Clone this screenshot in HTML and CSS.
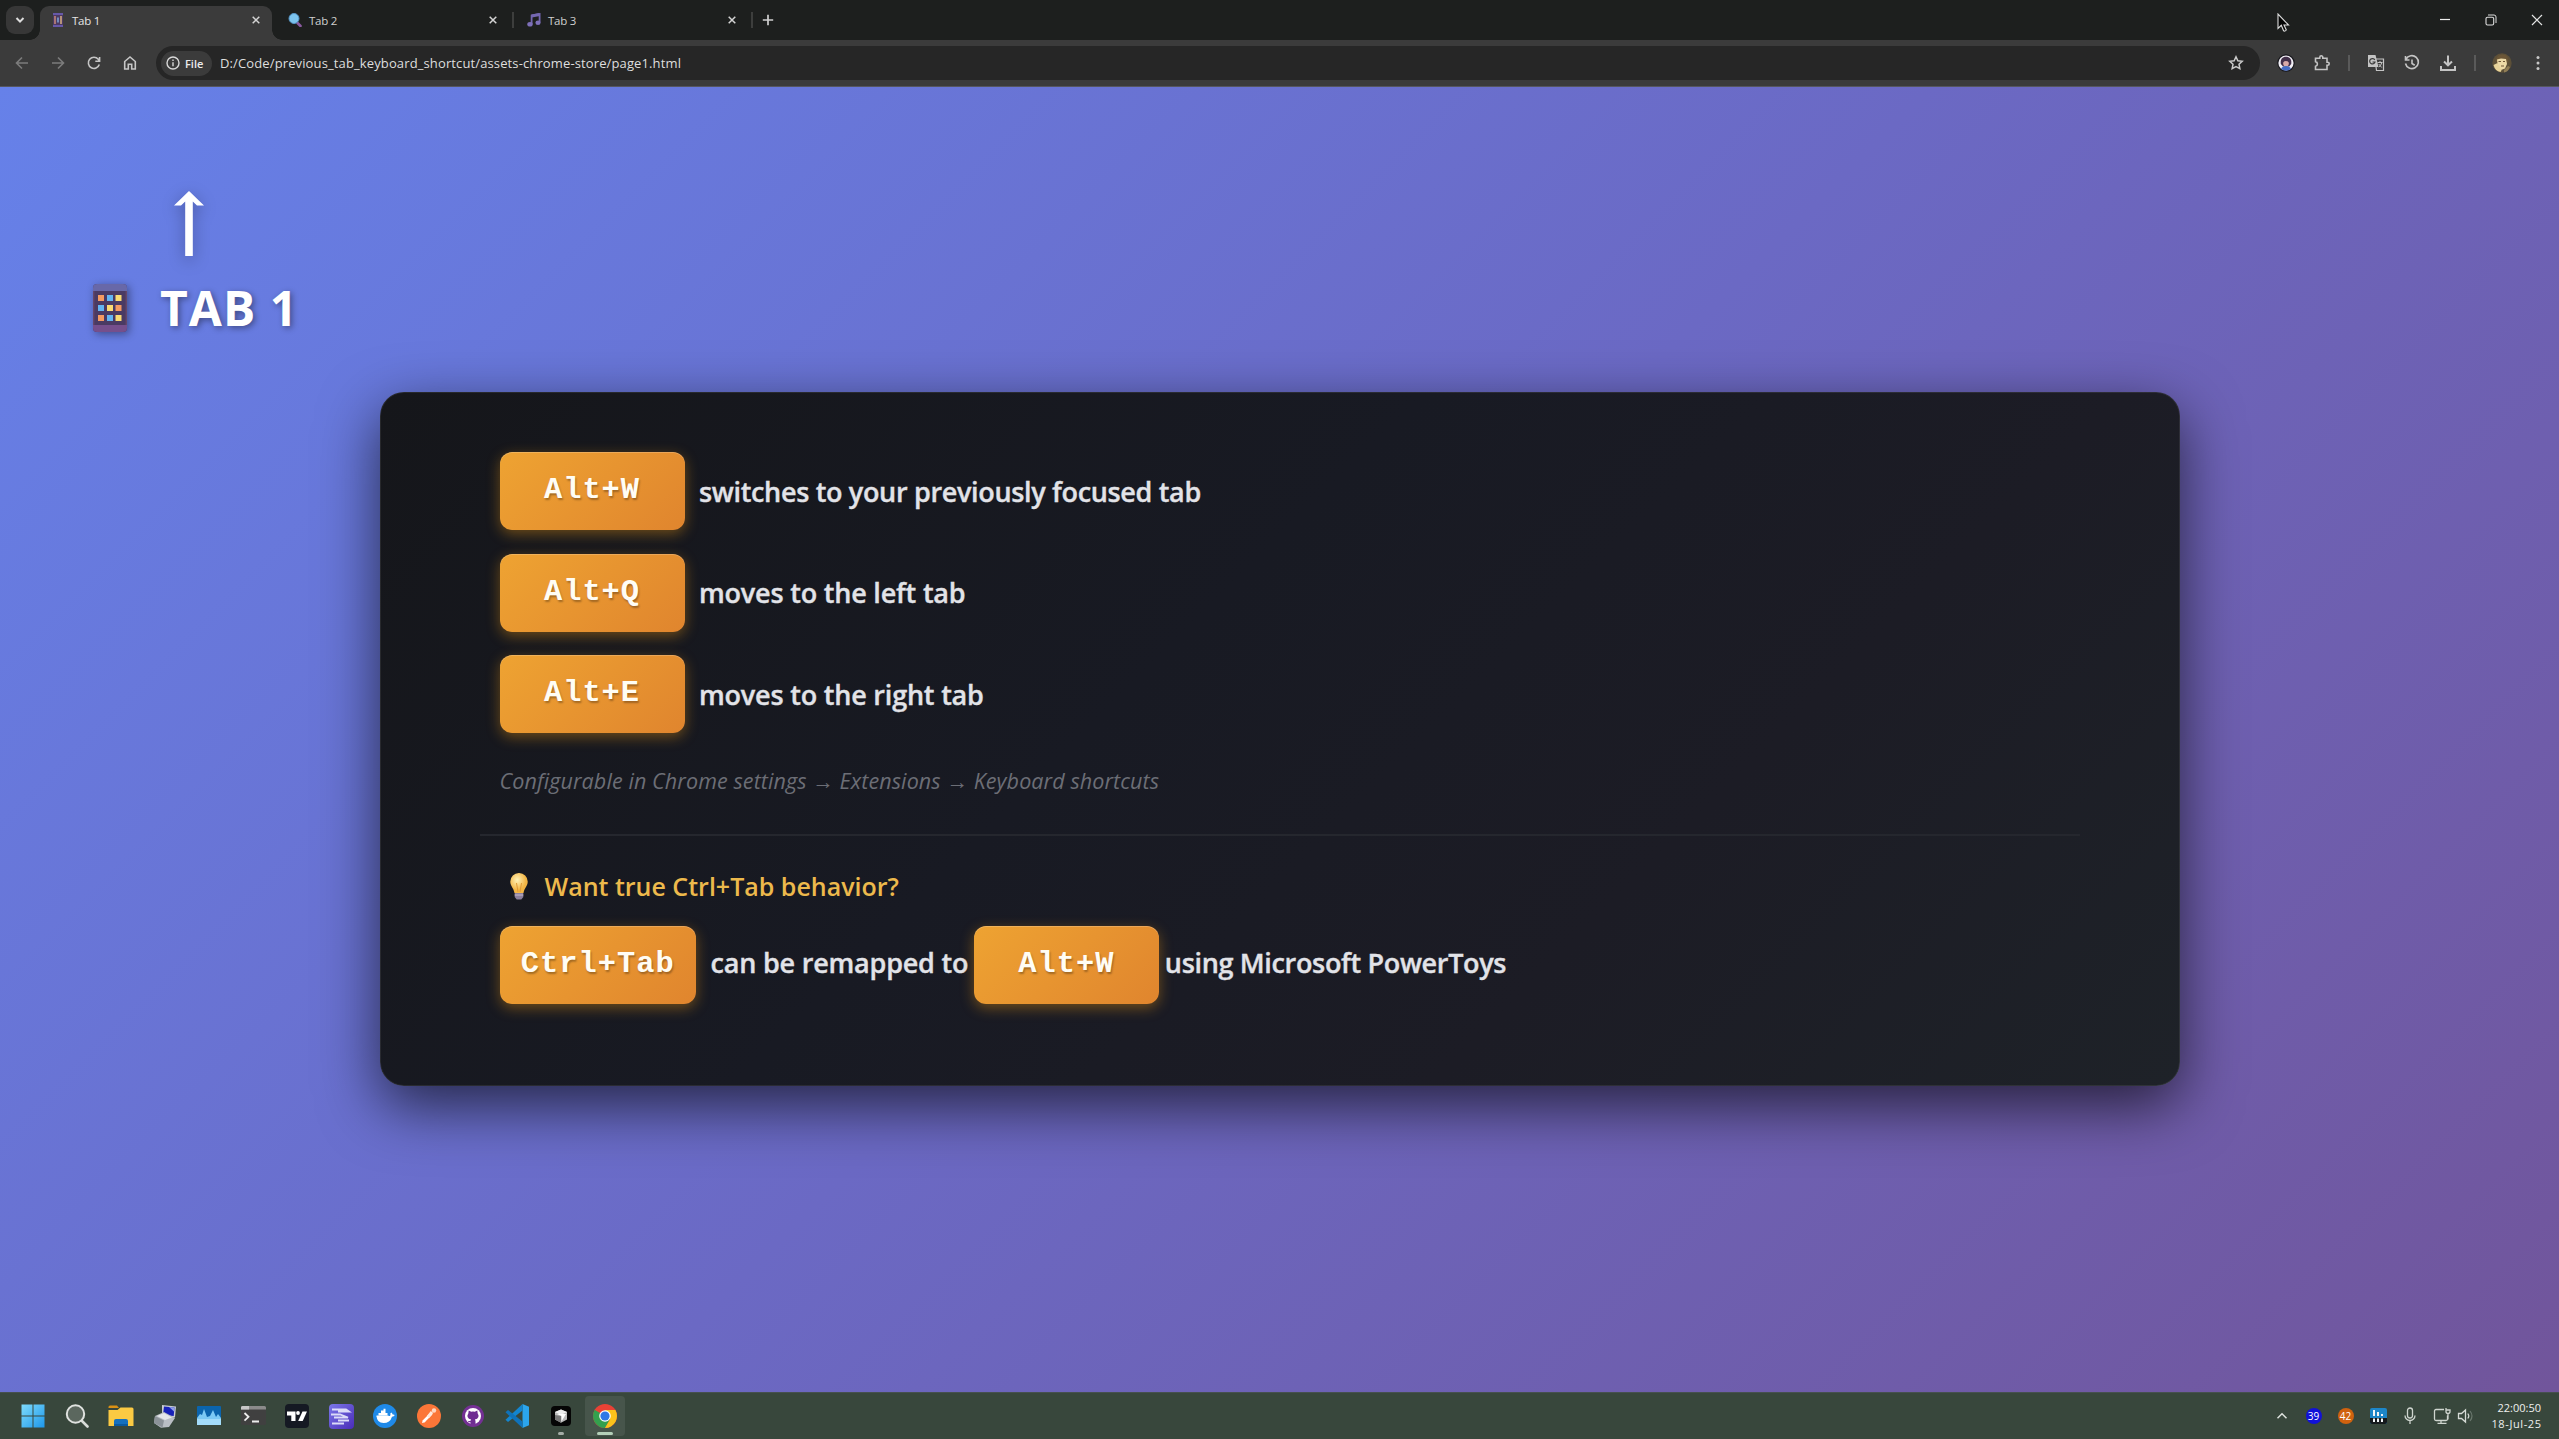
FILE: index.html
```html
<!DOCTYPE html>
<html lang="en">
<head>
<meta charset="utf-8">
<title>Tab 1</title>
<link rel="stylesheet" href="styles.css">
</head>
<body>
<div class="tabstrip">
  <div class="tab-search"><svg width="12" height="12" viewBox="0 0 12 12"><path d="M2.500 4l3.500 3.600L9.500 4" fill="none" stroke="#ddd" stroke-width="2"/></svg></div>
  <div class="tab active">
    <svg class="fav" width="14" height="14" viewBox="0 0 14 14"><rect x="2" y="0" width="10" height="14" rx="1" fill="#4c3a63"/><path d="M2 1h10M2 13h10" stroke="#6658a8" stroke-width="2"/><path d="M4 3v8" stroke="#c98a7a" stroke-width="1.500"/><path d="M7 4.500v5" stroke="#7ea8d8" stroke-width="1.500"/><path d="M10 3v8" stroke="#d8b080" stroke-width="1.500"/></svg>
    <span class="tab-name">Tab 1</span>
    <svg class="x" width="8" height="8" viewBox="0 0 8 8"><path d="M.7.7l6.600 6.600M7.300.7L.7 7.300"/></svg>
  </div>
  <div class="tab second">
    <svg class="fav" width="14" height="14" viewBox="0 0 14 14"><path d="M9.500 10l3 3" stroke="#8a5aa0" stroke-width="2.600" stroke-linecap="round"/><circle cx="6" cy="5.500" r="5" fill="#7cc4ee" stroke="#5796c8"/></svg>
    <span class="tab-name">Tab 2</span>
    <svg class="x" width="8" height="8" viewBox="0 0 8 8"><path d="M.7.7l6.600 6.600M7.300.7L.7 7.300"/></svg>
  </div>
  <div class="tab third">
    <svg class="fav" width="14" height="14" viewBox="0 0 14 14"><path d="M4.600 11V2.500l8-1.500v8.500" fill="none" stroke="#7467b0" stroke-width="1.800"/><path d="M4.600 3l8-1.500" stroke="#7467b0" stroke-width="3"/><ellipse cx="3" cy="11.300" rx="2.700" ry="2.300" fill="#7d6fb8"/><ellipse cx="11" cy="9.700" rx="2.600" ry="2.200" fill="#7d6fb8"/></svg>
    <span class="tab-name">Tab 3</span>
    <svg class="x" width="8" height="8" viewBox="0 0 8 8"><path d="M.7.7l6.600 6.600M7.300.7L.7 7.300"/></svg>
  </div>
  <svg class="plus" width="12" height="12" viewBox="0 0 12 12"><path d="M6 .8v10.400M.8 6h10.400" stroke="#d0d0d0" stroke-width="1.700"/></svg>
  <div class="window-buttons">
    <svg width="12" height="12" viewBox="0 0 12 12"><path d="M1 5.500h10" stroke="#eee" stroke-width="1.200"/></svg>
    <svg width="12" height="12" viewBox="0 0 12 12"><path d="M3 1h6a2 2 0 0 1 2 2v6" fill="none" stroke="#ddd"/><rect x="1" y="3.300" width="7.700" height="7.700" rx="1.500" fill="none" stroke="#ddd" stroke-width="1.100"/></svg>
    <svg width="12" height="12" viewBox="0 0 12 12"><path d="M1 1l10 10M11 1L1 11" stroke="#e4e4e4" stroke-width="1.200"/></svg>
  </div>
</div>

<div class="toolbar">
  <div class="nav">
    <svg class="dim" width="16" height="16" viewBox="0 0 16 16"><path d="M14 8H3M8 2.500L2.500 8 8 13.500"/></svg>
    <svg class="dim" width="16" height="16" viewBox="0 0 16 16"><path d="M2 8h11M8 2.500L13.500 8 8 13.500"/></svg>
    <svg width="16" height="16" viewBox="0 0 16 16"><path d="M13.300 9.500A5.600 5.600 0 1 1 12.300 4.300L13.500 6M13.600 2v4.300H9.300"/></svg>
    <svg width="16" height="16" viewBox="0 0 16 16"><path d="M2.700 14V6.500L8 2l5.300 4.500V14H9.700V9.300H6.300V14z"/></svg>
  </div>
  <div class="omnibox">
    <div class="chip"><svg width="14" height="14" viewBox="0 0 14 14"><circle cx="7" cy="7" r="6"/><path d="M7 6.200v4M7 3.500v1.500"/></svg><span class="chip-name">File</span></div>
    <span class="url">D:/Code/previous_tab_keyboard_shortcut/assets-chrome-store/page1.html</span>
    <svg class="star" width="16" height="16" viewBox="0 0 16 16"><path d="M8 1.800l1.850 4 4.350.5-3.200 3 .85 4.300L8 11.500l-3.850 2.100.85-4.300-3.200-3 4.350-.5z"/></svg>
  </div>
  <div class="actions">
    <svg width="18" height="18" viewBox="0 0 18 18"><circle cx="9" cy="9" r="8.700" fill="#17171c"/><circle cx="9" cy="9" r="7.600" fill="#f1eff5"/><path d="M3.800 10C3 4.500 6 2.800 9 2.800s6 1.700 5.200 7.200l-2 2.500H6z" fill="#43304a"/><ellipse cx="9" cy="9.500" rx="2.800" ry="3" fill="#d9aaa8"/><path d="M6 8q3-2 6 0V5.500H6z" fill="#43304a"/><path d="M4 15q1-3 5-3t5 3q-5 3.500-10 0z" fill="#456cc4"/></svg>
    <svg class="line" width="18" height="18" viewBox="0 0 18 18"><path d="M2.500 4.200H6.800V3.300a1.500 1.500 0 0 1 3 0v.9h4.200v4.100h.7a1.500 1.500 0 0 1 0 3h-.7V15.500H2.500V12.300a2.400 2.400 0 0 0 0-4.700z"/></svg>
    <i class="bar"></i>
    <svg width="18" height="18" viewBox="0 0 18 18"><path d="M8 5h8.500v11.500H9.500z" fill="none" stroke="#c4c4c4" stroke-width="1.200"/><path d="M1 1h7.500l3 12H1z" fill="#c4c4c4"/><path d="M7.800 6A2.700 2.700 0 1 0 8 8H5.500" fill="none" stroke="#3b3b3b" stroke-width="1.200"/><path d="M10.500 8.500h5M13 7v1.500M14.800 8.700q-.8 3-3 4.300M11.700 10l3 3.500" fill="none" stroke="#c4c4c4"/></svg>
    <svg class="line" width="18" height="18" viewBox="0 0 18 18"><path d="M3 5.300A6.500 6.500 0 1 1 2.500 9.500M2.500 2v4h4M9 5.500v4l2.700 1.700"/></svg>
    <svg class="line thick" width="18" height="18" viewBox="0 0 18 18"><path d="M9 1.500v9.500M5 7.500L9 11.300l4-3.800M2 12v4h14v-4"/></svg>
    <i class="bar"></i>
    <svg class="avatar" width="20" height="20" viewBox="0 0 20 20"><circle cx="10" cy="10" r="9.700" fill="#5d5038"/><path d="M4 8Q4 2 10 1.500T16.500 8L14 12 5 10z" fill="#6b5637"/><path d="M5 6.500l4-1 5 .5 1 5-2 4.500-4 1.500-3-3z" fill="#ecd9a6"/><path d="M1.500 12l4-2 4 7.500-1 1.500Q3 18 1.500 12z" fill="#e8d39a"/><path d="M6.500 8.500h2.500M11 8.500h2M9 13h3" stroke="#705738"/><path d="M12 17l4-4 2 1Q16 19 12 19.500z" fill="#8f7c55"/></svg>
    <svg width="18" height="18" viewBox="0 0 18 18" fill="#c8c8c8"><circle cx="9" cy="3.500" r="1.500"/><circle cx="9" cy="9" r="1.500"/><circle cx="9" cy="14.500" r="1.500"/></svg>
  </div>
</div>

<main class="page">
  <div class="pointer-to-tab">
    <svg class="arrow" width="32" height="68" viewBox="0 0 32 68"><path d="M16 1L31 15.500H24L19.800 11.500V66H12.200V11.500L8 15.500H1z" fill="#fff"/></svg>
    <div class="heading">
      <svg class="phone" width="34" height="48" viewBox="0 0 34 48"><rect width="34" height="48" rx="4" fill="#4a3a63"/><path d="M4 0h26a4 4 0 0 1 4 4v3H0V4a4 4 0 0 1 4-4z" fill="#6868a8"/><path d="M0 41h34v3a4 4 0 0 1-4 4H4a4 4 0 0 1-4-4z" fill="#754f8c"/><path d="M.7 7v34M33.300 7v34" stroke="#654668" stroke-width="1.400"/><g fill="#f49a61"><rect x="5" y="11" width="6" height="6"/><rect x="22.500" y="21" width="6" height="6"/><rect x="5" y="31" width="6" height="6"/></g><g fill="#62b5f3"><rect x="14" y="11" width="6" height="6"/><rect x="5" y="21" width="6" height="6"/><rect x="14" y="31" width="6" height="6"/></g><g fill="#fadb72"><rect x="22.500" y="11" width="6" height="6"/><rect x="14" y="21" width="6" height="6"/><rect x="22.500" y="31" width="6" height="6"/></g></svg>
      <span class="heading-text">TAB 1</span>
    </div>
  </div>

  <section class="card">
    <div class="row"><kbd>Alt+W</kbd><span class="say tight">switches to your previously focused tab</span></div>
    <div class="row"><kbd>Alt+Q</kbd><span class="say">moves to the left tab</span></div>
    <div class="row"><kbd>Alt+E</kbd><span class="say">moves to the right tab</span></div>
    <p class="note">Configurable in Chrome settings → Extensions → Keyboard shortcuts</p>
    <div class="extra">
      <div class="tip">
        <svg width="18" height="27" viewBox="0 0 18 27"><defs><radialGradient id="glow" cx=".4" cy=".35"><stop offset="0" stop-color="#fff3b8"/><stop offset="1" stop-color="#f3b544"/></radialGradient></defs><path d="M9 0a8.600 8.600 0 0 1 8.700 8.700c0 4-3.200 6-4.200 11.300h-9C3.500 14.700.3 12.700.3 8.700A8.600 8.600 0 0 1 9 0z" fill="url(#glow)"/><path d="M6.500 10l1.500 9M11.500 10L10 19" stroke="#e09a35" fill="none"/><path d="M4.700 20h8.600v4l-2 2.500H6.700L4.700 24z" fill="#8b7f9c"/><path d="M4.700 22h8.600" stroke="#c5b9cf"/></svg>
        <span class="tip-text">Want true Ctrl+Tab behavior?</span>
      </div>
      <div class="row"><kbd>Ctrl+Tab</kbd><span class="say">can be remapped to</span><kbd class="inline">Alt+W</kbd><span class="say tight after">using Microsoft PowerToys</span></div>
    </div>
  </section>
</main>

<footer class="taskbar">
  <div class="apps">
    <div class="app"><svg width="24" height="24" viewBox="0 0 24 24"><defs><linearGradient id="win" x2="1" y2="1"><stop offset="0" stop-color="#7fdcfb"/><stop offset="1" stop-color="#1d97ea"/></linearGradient></defs><path d="M.5.5h11v11H.5zM12.500.5h11v11h-11zM.5 12.500h11v11H.5zM12.500 12.500h11v11h-11z" fill="url(#win)"/></svg></div>
    <div class="app"><svg width="24" height="24" viewBox="0 0 24 24"><path d="M16.500 16.500l6 6" stroke="#d8dcd8" stroke-width="2.600" stroke-linecap="round"/><circle cx="10.500" cy="10" r="8.700" fill="#5b675e" stroke="#dfe2df" stroke-width="2"/></svg></div>
    <div class="app"><svg width="26" height="24" viewBox="0 0 26 24"><path d="M.5 3Q.5 1.500 2 1.500h7l2 2.500H.5z" fill="#d99114"/><path d="M.5 6h9l3-2.500h11.500a1.500 1.500 0 0 1 1.500 1.500v17H.5z" fill="#fbca43"/><path d="M6 22v-5a2 2 0 0 1 2-2h10a2 2 0 0 1 2 2v5z" fill="#1670bd"/><path d="M6 22v-2h14v2z" fill="#0c5a9e"/></svg></div>
    <div class="app"><svg width="25" height="25" viewBox="0 0 25 25"><path d="M9 1l14 1.500-1 11-13-1.500z" fill="#c8ccd2"/><path d="M11 2.500l10.500 1-.8 8.500L10 11z" fill="#1822b8"/><path d="M16 3l5.500.5-.5 4z" fill="#8fa0ea"/><path d="M2 12l9-4 11 6-6 9-8 .8L1 19z" fill="#b9bec4"/><path d="M2 12l9 4.500-1.500 7L1 19z" fill="#8b9298"/><path d="M4 12l7-3 8 4.500-7 2.500z" fill="#e6e8ea"/></svg></div>
    <div class="app"><svg width="24" height="20" viewBox="0 0 24 20"><rect width="24" height="19" rx="1" fill="#0b64ad"/><path d="M0 12l3-4 2 1 2-6 3 8 3-1 3-6 3 7 2-3 3 4v7H0z" fill="#7cc9f5"/><path d="M0 13h24v6H0z" fill="#a3dcfa"/></svg></div>
    <div class="app"><svg width="25" height="20" viewBox="0 0 25 20"><rect width="25" height="19" rx="1.500" fill="#404040"/><path d="M0 3.500V1.500A1.500 1.500 0 0 1 1.500 0h22A1.500 1.500 0 0 1 25 1.500v2z" fill="#8b8b8b"/><path d="M0 3.500V1.500A1.500 1.500 0 0 1 1.500 0H8v3.500z" fill="#c7c7c7"/><path d="M3.500 7l4 3.800-4 3.800M11 15.500h7" fill="none" stroke="#ededed" stroke-width="1.800"/></svg></div>
    <div class="app"><svg width="24" height="24" viewBox="0 0 24 24"><rect width="24" height="24" rx="4" fill="#151923"/><path d="M2 7.500h8.500V17H6.300v-5.500H2z" fill="#fff"/><circle cx="13" cy="9" r="1.900" fill="#fff"/><path d="M17.500 7.500H22L17.700 17h-4.500z" fill="#fff"/></svg></div>
    <div class="app"><svg width="25" height="25" viewBox="0 0 25 25"><defs><linearGradient id="pur" x2="1" y2="1"><stop offset="0" stop-color="#7b77e8"/><stop offset="1" stop-color="#4a2cb8"/></linearGradient></defs><rect width="25" height="25" rx="4" fill="url(#pur)"/><path d="M3 5.500h14l3 2H9M2 10.500h9l8 3H5M9 16.500h11M3 19.500h12" fill="none" stroke="#dcdcf8" stroke-width="1.800"/></svg></div>
    <div class="app"><svg width="24" height="24" viewBox="0 0 24 24"><circle cx="12" cy="12" r="12" fill="#1f8ae8"/><path d="M3.500 12H17q.8-1 .3-2.500l1-1q1.200.8 1.300 2 1.200-.2 2.200.4-.7 1.800-2.800 1.800Q17 19 10.500 19 4 19 3.500 12z" fill="#fff"/><path d="M5.500 9h9v2.500h-9zM8 6.500h4.500V9H8zM10.500 4.800h2v2h-2z" fill="#fff"/><path d="M3.500 11.500h12v1h-12z" fill="#fff"/></svg></div>
    <div class="app"><svg width="24" height="24" viewBox="0 0 24 24"><circle cx="12" cy="12" r="12" fill="#fb7638"/><path d="M6 18L14.500 9.500" stroke="#fff" stroke-width="2.600"/><path d="M11 13l4-5" stroke="#ffe8dc" stroke-width="3"/><circle cx="17" cy="6.500" r="2.200" fill="#ffd7c2"/><path d="M5 18.500l4-2" stroke="#fff"/></svg></div>
    <div class="app"><svg width="24" height="24" viewBox="0 0 24 24"><circle cx="12" cy="12" r="11" fill="#743094"/><circle cx="12" cy="12" r="8" fill="#fff"/><path d="M7.700 6.500l2.500 1.300q1.800-.4 3.600 0l2.500-1.300.4 3q1.300 1.500.7 3.500-.8 2.300-3.600 2.600.7.700.7 2V20H9.500v-1.700q-2 .3-2.800-1.600 1.300.8 2.900 0 .1-.7.600-1.100-2.800-.3-3.600-2.600-.6-2 .7-3.500z" fill="#6f2d92"/></svg></div>
    <div class="app"><svg width="24" height="24" viewBox="0 0 24 24"><path d="M17.500 0L24 2.800v18.400L17.500 24z" fill="#2ba5ec"/><path d="M17.500 0v6.500L3 18l-2.500-2.200z" fill="#1385cf"/><path d="M17.500 24v-6.500L3 6 .5 8.200z" fill="#0f72ba"/></svg></div>
    <div class="app running"><svg width="20" height="20" viewBox="0 0 20 20"><rect width="20" height="20" rx="4" fill="#050505"/><path d="M4 6l6-2.500L16 6v7.500L10 16.800 4 13.500z" fill="#bbb"/><path d="M4 6l6-2.500L16 6l-6 3z" fill="#eee"/><path d="M6 8h9l-4.500 7.500V10z" fill="#fff"/><path d="M4 9l6 1v6.800L4 13.500z" fill="#777"/></svg></div>
    <div class="app current"><svg width="24" height="24" viewBox="0 0 24 24"><circle cx="12" cy="12" r="12" fill="#e94235"/><path d="M1.610 6A12 12 0 0 0 12 24L17.200 15z" fill="#34a04e"/><path d="M1.610 6L6.800 15 12 12z" fill="#34a04e"/><path d="M22.390 6A12 12 0 0 1 12 24L17.200 15 12 6z" fill="#fbc31b"/><circle cx="12" cy="12" r="5.800" fill="#fff"/><circle cx="12" cy="12" r="4.600" fill="#2f78e6"/></svg></div>
  </div>
  <div class="tray">
    <svg width="12" height="12" viewBox="0 0 12 12"><path d="M1.500 8.300L6 3.800l4.500 4.500" fill="none" stroke="#dde2dd" stroke-width="1.500"/></svg>
    <span class="badge blue">39</span>
    <span class="badge orange">42</span>
    <svg width="17" height="16" viewBox="0 0 17 16"><rect width="17" height="16" rx="2" fill="#1d86c8"/><path d="M0 10h17v4a2 2 0 0 1-2 2H2a2 2 0 0 1-2-2z" fill="#15191c"/><path d="M4 2v6M8 4v4M12 6v2M4 10.500V14M8 10.500V14M12 10.500V14" stroke="#f3f6f8" stroke-width="2"/></svg>
    <svg class="mic" width="14" height="18" viewBox="0 0 14 18"><rect x="4.500" y="1" width="5" height="10" rx="2.500"/><path d="M2 8.500a5 5 0 0 0 10 0M7 13.500V17"/></svg>
    <svg class="net" width="19" height="18" viewBox="0 0 19 18"><path d="M11 2.500H3A1.500 1.500 0 0 0 1.500 4v8A1.500 1.500 0 0 0 3 13.500h10a1.500 1.500 0 0 0 1.500-1.500V8.500M8 13.500V16M4.500 16.300h9M13 1v3.500q0 2 2 2t2-2V3h-4M15 6.500v6"/></svg>
    <svg class="snd" width="18" height="16" viewBox="0 0 18 16"><path d="M1.500 5.500h3L8.500 2v12L4.500 10.500h-3z" fill="none" stroke="#d6dbd6" stroke-width="1.300"/><path d="M10.800 5.500q2 2.500 0 5" fill="none" stroke="#d6dbd6" stroke-width="1.200"/><path d="M13 3q4 5 0 10" fill="none" stroke="#6b786e" stroke-width="1.200"/></svg>
    <div class="clock"><span>22:00:50</span><span class="date">18-Jul-25</span></div>
  </div>
</footer>

<svg class="cursor" width="13" height="20" viewBox="0 0 13 20"><path d="M1 1v14.500l3.300-3.200 2.300 5.500q1.200.9 2.700-.8L7 12h4.500z" fill="#050505" stroke="#ddd" stroke-width="1.100"/></svg>
</body>
</html>
```
FILE: styles.css
```css
* { box-sizing: border-box; }
body { margin: 0; width: 2559px; height: 1439px; overflow: hidden; display: flex; flex-direction: column; font-family: "Open Sans", "Noto Sans", sans-serif; background: #3b3b3b; }
svg { display: block; flex: none; }

/* Tab strip */
.tabstrip { height: 40px; flex: none; display: flex; align-items: flex-start; padding: 6px 16px 0 6px; background: #1d1f1e; }
.tab-search { width: 28px; height: 28px; border-radius: 9px; background: #373737; display: flex; align-items: center; justify-content: center; margin-right: 6px; }
.tab { width: 239px; height: 34px; display: flex; align-items: center; padding: 0 14px 6px 16px; position: relative; color: #d0d0d0; font-size: 11.500px; letter-spacing: -.25px; }
.tab.active { width: 232px; padding: 0 12px 6px 11px; background: #3b3b3b; border-radius: 9px 9px 0 0; color: #e6e6e6; }
.tab.active::before, .tab.active::after { content: ""; position: absolute; bottom: 0; width: 10px; height: 10px; }
.tab.active::before { left: -10px; background: radial-gradient(circle at 0 0, transparent 9.500px, #3b3b3b 10px); }
.tab.active::after { right: -10px; background: radial-gradient(circle at 100% 0, transparent 9.500px, #3b3b3b 10px); }
.second::after, .third::after { content: ""; position: absolute; right: -3px; top: 6px; width: 2px; height: 16px; background: #3d3e3d; }
.fav { margin-right: 7px; }
.x { margin-left: auto; stroke: #d4d4d4; stroke-width: 1.500; }
.plus { margin: 8px 0 0 12px; }
.window-buttons { margin-left: auto; display: flex; gap: 34px; padding-top: 8px; }

/* Toolbar */
.toolbar { height: 47px; flex: none; display: flex; align-items: center; background: #3b3b3b; padding: 0 12px 0 14px; border-bottom: 1px solid #55565f; }
.nav { display: flex; gap: 20px; width: 142px; }
.nav svg { fill: none; stroke: #c6c6c6; stroke-width: 1.600; }
.nav .dim { stroke: #7c7c7c; }
.omnibox { width: 2104px; height: 34px; border-radius: 17px; background: #262626; display: flex; align-items: center; padding: 0 16px 0 5px; }
.chip { height: 25px; width: 51px; border-radius: 13px; background: #3b3b3b; display: flex; align-items: center; padding-left: 5px; gap: 5px; margin-right: 8px; color: #ececec; font-size: 11px; font-weight: 600; }
.chip svg { fill: none; stroke: #d8d8d8; stroke-width: 1.400; }
.url { color: #dedede; font-size: 13px; letter-spacing: .125px; white-space: nowrap; }
.star { margin-left: auto; fill: none; stroke: #cbcbcb; stroke-width: 1.500; }
.actions { display: flex; align-items: center; gap: 18px; margin-left: 16.500px; }
.line { fill: none; stroke: #c4c4c4; stroke-width: 1.600; }
.thick { stroke-width: 2; }
.bar { width: 2px; height: 16px; margin: 0 -1px; background: #5a5a5a; }
.avatar { margin: 0 -1px; }

/* Page */
.page { flex: 1; min-height: 0; background: linear-gradient(135deg, #6681e9 0%, #6b69c4 50%, #71559b 100%); display: flex; flex-direction: column; }
.pointer-to-tab { height: 305px; padding: 103px 0 0 93px; flex: none; }
.arrow { margin-left: 80px; filter: drop-shadow(0 4px 8px rgba(0,0,0,.3)); }
.heading { display: flex; align-items: center; height: 66px; margin-top: 17px; }
.phone { filter: drop-shadow(2px 2px 4px rgba(0,0,0,.4)); }
.heading-text { margin-left: 33px; color: #fff; font-size: 48px; line-height: 66px; font-weight: 700; letter-spacing: 1px; white-space: pre; text-shadow: 2px 2px 6px rgba(0,0,0,.4); }

.card { width: 1800px; height: 694px; margin: 0 auto; flex: none; border-radius: 24px; padding: 59px 99px 0; border: 1px solid rgba(255,255,255,.08); background: linear-gradient(135deg, #15161a 0%, #181a23 42%, #1c1c25 70%, #1e2228 100%) border-box; box-shadow: 0 20px 60px rgba(0,0,0,.65); }
.row { display: flex; align-items: center; height: 78px; margin: 0 0 23.500px 20px; }
kbd { width: 185px; height: 78px; flex: none; border-radius: 12px; display: flex; align-items: center; justify-content: center; padding-bottom: 2px; font: 700 30.400px "Courier New", "Liberation Mono", monospace; letter-spacing: 1px; color: #fffdf5; background: linear-gradient(135deg, #eea332, #e0852e); box-shadow: 0 4px 14px rgba(243,156,18,.4), inset 0 1px 0 rgba(255,255,255,.2); text-shadow: 1px 2px 2px rgba(0,0,0,.3); }
.say { margin-left: 14.500px; color: #e2e3e8; font-weight: 600; font-size: 27px; letter-spacing: -.2px; -webkit-text-stroke: .35px #e2e3e8; white-space: nowrap; }
.say.tight { letter-spacing: -.33px; }
.note { margin: 28.500px 0 0 20px; color: #6c6e76; font-style: italic; font-size: 21.500px; letter-spacing: .1px; line-height: 38px; white-space: nowrap; }
.extra { border-top: 2px solid #25272e; padding-top: 31px; margin-top: 34.500px; }
.tip { height: 38px; display: flex; align-items: center; padding-left: 30px; margin-bottom: 20.500px; }
.tip-text { margin-left: 17px; color: #edb94c; font-size: 25px; font-weight: 600; white-space: nowrap; }
.extra kbd:first-child { width: 196.500px; }
.extra .say { padding-bottom: 4px; }
.extra .inline { margin-left: 5.500px; }
.extra .after { margin-left: 6px; }

/* Taskbar */
.taskbar { height: 47px; flex: none; background: #38473c; display: flex; justify-content: space-between; border-top: 1px solid #46504f; }
.apps { display: flex; padding-left: 11px; }
.app { width: 44px; height: 46px; display: flex; align-items: center; justify-content: center; position: relative; }
.app.current::before { content: ""; position: absolute; inset: 3px 2px 3px 2px; background: rgba(255,255,255,.08); border-radius: 4px; }
.app.current svg { position: relative; }
.app.running::after, .app.current::after { content: ""; position: absolute; left: 50%; transform: translateX(-50%); top: 39px; height: 3px; width: 6px; border-radius: 2px; background: #a5ada6; }
.app.current::after { width: 16px; background: #b4cfb8; }
.tray { display: flex; align-items: center; padding-right: 18px; }
.badge { width: 16px; height: 16px; border-radius: 8px; color: #fff; font-size: 10px; line-height: 16px; text-align: center; margin-left: 16px; }
.blue { background: #1111d8; margin-left: 18px; }
.orange { background: #d0620f; }
.tray svg { margin-left: 16px; }
.mic, .net { fill: none; stroke: #cfd5cf; stroke-width: 1.300; }
.tray .snd { margin-left: 5.500px; }
.clock { width: 60px; margin-left: 6px; display: flex; flex-direction: column; align-items: flex-end; color: #eef0ee; font-size: 11px; line-height: 16px; }
.date { letter-spacing: .6px; margin-right: -.6px; }
.cursor { position: absolute; left: 2277px; top: 13px; }
```
